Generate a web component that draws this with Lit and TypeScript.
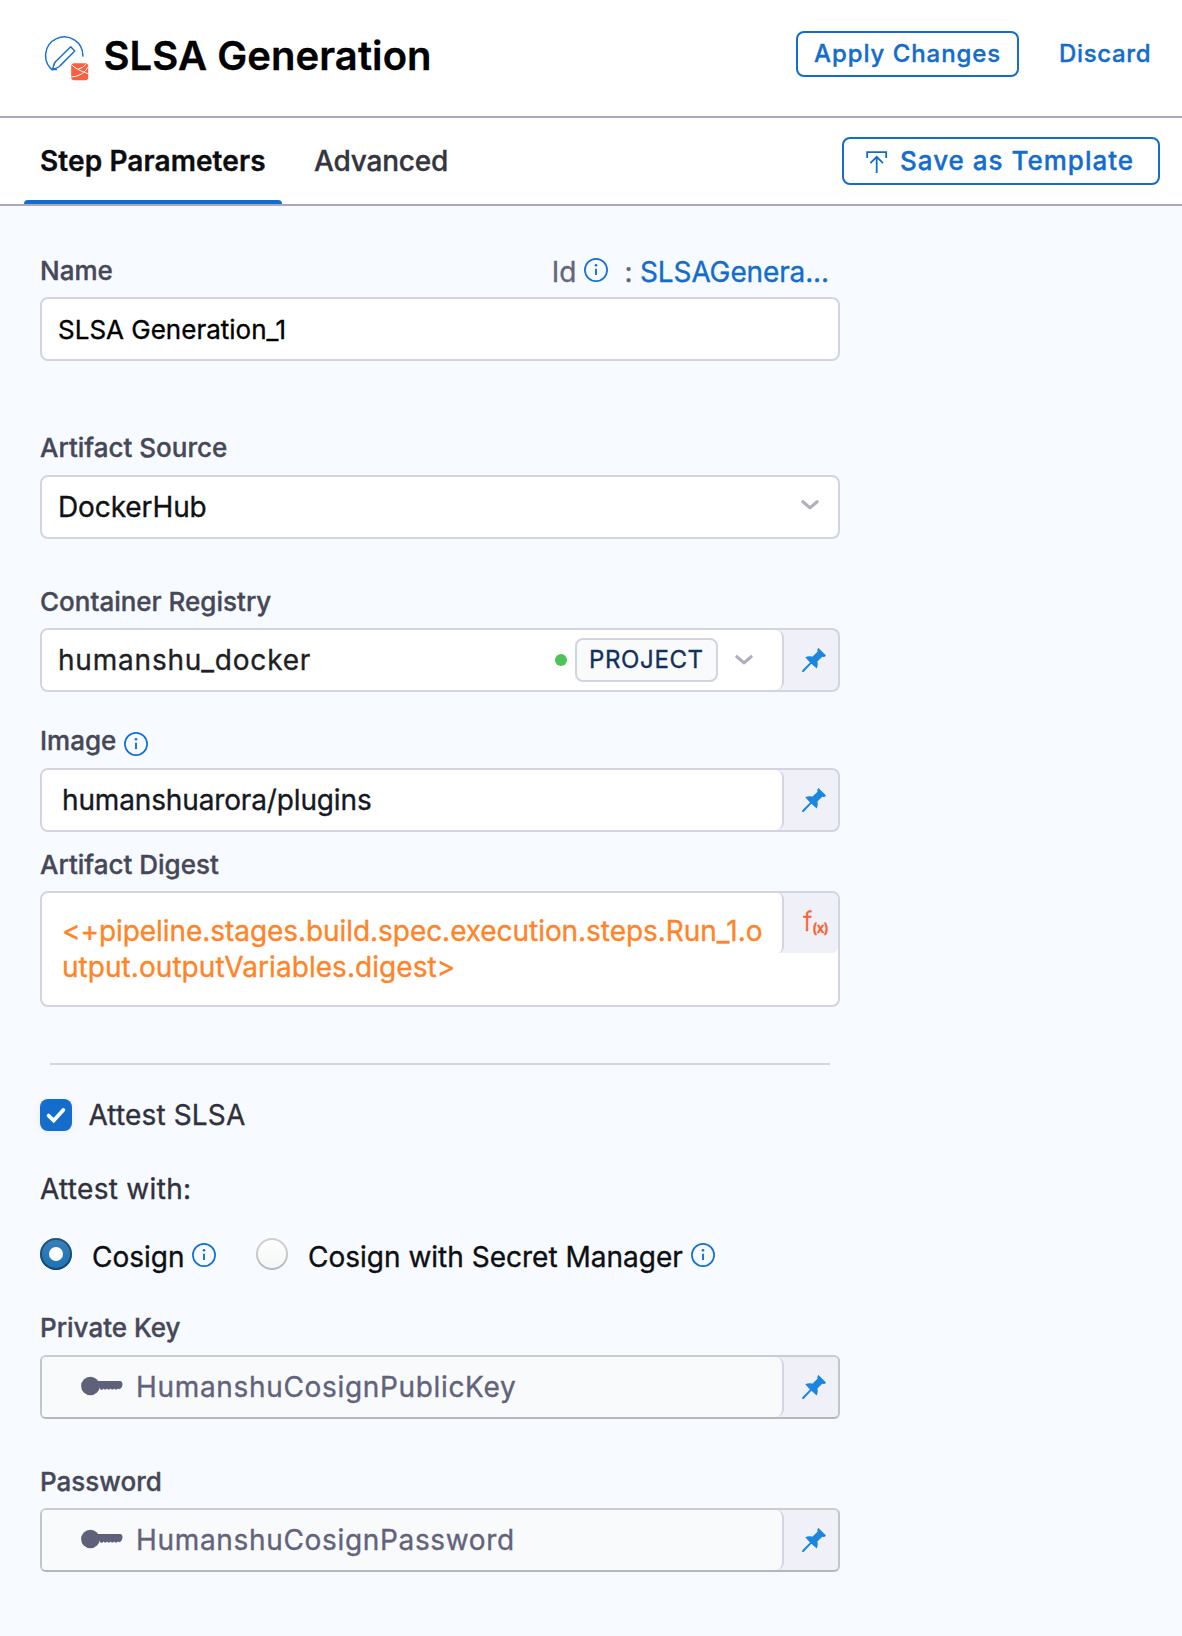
import { LitElement, html, css } from "lit";
import { customElement, property, state } from "lit/decorators.js";

const infoIcon = html`<svg class="info" width="24" height="24" viewBox="0 0 24 24" fill="none">
  <circle cx="12" cy="12" r="11.1" stroke="#1470d2" stroke-width="1.7" />
  <circle cx="12" cy="7.3" r="1.3" fill="#1470d2" />
  <path d="M12 10.7v6.3" stroke="#1470d2" stroke-width="1.9" />
</svg>`;

const chevronIcon = html`<svg class="chevron" width="18" height="10" viewBox="0 0 18 10" fill="none">
  <path d="M1.9 1.7L9 7.9l7.1-6.2" stroke="#b0afbe" stroke-width="3.2" stroke-linecap="round" stroke-linejoin="round" />
</svg>`;

const pinIcon = html`<svg class="pin" width="24" height="24" viewBox="0 0 24 24" fill="#1a86de">
  <path d="M16.5 0L24 7.4C23.2 8.7 21.6 9.1 20.3 8.8L15.4 13.6C16 16 15.8 18.5 14.7 20.6L9.4 15.8L1.6 24H.1L.3 22.3L8 14.5L3.3 9.3C5.5 8.1 8 8 10.3 8.7L15.5 3.8C15.1 2.5 15.4 1 16.5 0Z" />
</svg>`;

const keyIcon = html`<svg class="key" width="42" height="20" viewBox="0 0 42 20" fill="#5f6079">
  <circle cx="9.4" cy="10" r="9.3" />
  <path d="M16 5H39Q41.5 5.4 41.5 8.5Q41.5 11 39.6 12.4L38 13.2L37 12.4L35.8 13.4L34.2 13.4L33.2 12.4L32.2 13.6L30.6 13.6L29.6 12.4L28.6 13.6L27 13.6L26 12.4L25 13.6L23.4 13.6L22.4 12.4L21.4 13.8L19.8 13.8L18.6 12.6Z" />
</svg>`;

@customElement("pinned-field")
export class PinnedField extends LitElement {
  @property() value = "";
  @property({ type: Boolean, reflect: true }) secret = false;
  @property({ type: Boolean, reflect: true }) spaced = false;

  static styles = css`
    :host {
      display: flex;
      box-sizing: border-box;
      height: 64px;
      border: 2px solid #d4d4e0;
      border-radius: 8px;
      background: #f0f0f9;
      font: 400 28px/34px Inter, sans-serif;
      letter-spacing: -0.14px;
      color: #15191f;
    }
    :host([secret]) {
      border-color: #cbccce #c3c5c8 #b5b7ba #c3c5c8;
      border-radius: 6px;
      color: #62637b;
      letter-spacing: 0.67px;
    }
    :host([spaced]) {
      color: #1e1f24;
      letter-spacing: 0.8px;
    }
    .main {
      display: flex;
      align-items: center;
      box-sizing: border-box;
      flex: 1;
      padding-left: 20px;
      border-right: 2px solid #d4d4e2;
      border-radius: 6px 8px 8px 6px;
      background: #fff;
    }
    :host([spaced]) .main {
      padding-left: 16px;
    }
    :host([secret]) .main {
      padding-left: 39px;
      border-radius: 4px 8px 8px 4px;
      background: #f9fafb;
    }
    .text {
      flex: 1;
    }
    .key {
      flex: none;
      margin: -3px 13px 0 0;
    }
    .addon {
      display: flex;
      align-items: center;
      box-sizing: border-box;
      width: 54px;
      padding-left: 18px;
    }
  `;

  render() {
    return html`
      <div class="main">
        ${this.secret ? keyIcon : null}
        <span class="text">${this.value}</span>
        <slot></slot>
      </div>
      <div class="addon">${pinIcon}</div>
    `;
  }
}

@customElement("app-root")
export class AppRoot extends LitElement {
  @state() private attested = true;
  @state() private method: "cosign" | "manager" = "cosign";

  static styles = css`
    :host {
      display: block;
      box-sizing: border-box;
      min-height: 1636px;
      background: #f7faff;
      font: 400 28px/34px Inter, sans-serif;
      -webkit-text-stroke: 0.35px currentColor;
      color: #000;
    }
    svg {
      display: block;
      flex: none;
    }
    .header {
      display: flex;
      align-items: flex-start;
      box-sizing: border-box;
      height: 118px;
      padding: 31px 31px 0 44px;
      border-bottom: 2px solid #a9a8be;
      background: #fff;
    }
    .step-icon {
      margin: 5px 13.5px 0 0;
    }
    .title {
      margin: 0;
      font: 600 40px/49px Inter, sans-serif;
      letter-spacing: 0.07px;
    }
    .button {
      display: flex;
      box-sizing: border-box;
      height: 46px;
      padding: 0 16px;
      border: 2px solid #146ccb;
      border-radius: 8px;
      background: #fff;
      color: #146ccb;
      font: 500 24px/41px Inter, sans-serif;
      letter-spacing: 0.93px;
      white-space: nowrap;
    }
    .apply {
      width: 223px;
      margin-left: auto;
    }
    .discard {
      width: 92px;
      padding: 2px 0 0;
      margin-left: 40px;
      color: #146ccb;
      font: 500 24px/41px Inter, sans-serif;
      letter-spacing: 0.65px;
    }
    .tabbar {
      display: flex;
      align-items: flex-start;
      box-sizing: border-box;
      height: 88px;
      padding: 0 22px 0 24px;
      border-bottom: 2px solid #a9a8be;
      background: #fff;
    }
    .tab {
      box-sizing: border-box;
      width: 258px;
      padding: 26px 0 22px 16px;
      color: #0c0d10;
      font-weight: 600;
      letter-spacing: 0.1px;
    }
    .indicator {
      width: 258px;
      height: 4px;
      border-radius: 4px 4px 0 0;
      background: #146ccb;
    }
    .second {
      width: auto;
      padding-left: 32px;
      color: #34353f;
      font-weight: 500;
      letter-spacing: -0.2px;
    }
    .template {
      width: 318px;
      height: 48px;
      margin: 19px 0 0 auto;
      padding: 0 0 0 21.5px;
      font-size: 26px;
      line-height: 43px;
      letter-spacing: 1px;
    }
    .upload {
      margin: 12px 12.5px 0 0;
    }
    .form {
      width: 800px;
      padding: 49px 0 0 40px;
    }
    .label {
      display: flex;
      align-items: flex-start;
      height: 31px;
      margin-bottom: 12px;
      color: #464858;
      font-weight: 500;
      font-size: 26px;
      line-height: 31px;
    }
    .tight {
      margin-bottom: 11px;
    }
    .name-row {
      height: 34px;
      margin-bottom: 8px;
    }
    .id {
      display: flex;
      margin-left: auto;
      padding-right: 11px;
      color: #65667c;
      font-weight: 400;
      font-size: 28px;
      line-height: 34px;
    }
    .id .info {
      margin: 3px 16px 0 8px;
    }
    .id-value {
      margin-left: 7.5px;
      color: #146ccb;
      letter-spacing: -0.13px;
    }
    .field {
      display: flex;
      align-items: center;
      box-sizing: border-box;
      height: 64px;
      padding: 0 19px 0 16px;
      border: 2px solid #d4d4e0;
      border-radius: 8px;
      background: #fff;
    }
    .name {
      padding-top: 2px;
      font-size: 26px;
      line-height: 32px;
    }
    .source {
      justify-content: space-between;
      color: #101114;
      letter-spacing: -0.1px;
    }
    .source .chevron {
      margin-top: -4px;
    }
    .g17 { margin-top: 17px; }
    .g33 { margin-top: 33px; }
    .g42 { margin-top: 42px; }
    .g47 { margin-top: 47px; }
    .g71 { margin-top: 71px; }
    .status {
      width: 12px;
      height: 12px;
      margin-right: 8px;
      border-radius: 50%;
      background: #4fc456;
    }
    .scope {
      box-sizing: border-box;
      width: 143px;
      height: 44px;
      padding-left: 12px;
      border: 2px solid #d4d4e0;
      border-radius: 8px;
      background: #f9fafc;
      color: #11305c;
      font-size: 24px;
      line-height: 39px;
      letter-spacing: 0.64px;
    }
    .pick {
      padding: 0 29px 0 17px;
    }
    .image-info {
      margin: 7px 0 0 7.7px;
    }
    .digest {
      display: flex;
      align-items: flex-start;
      box-sizing: border-box;
      height: 116px;
      border: 2px solid #d4d4e0;
      border-radius: 8px;
      background: #fff;
      color: #ff8427;
      line-height: 36px;
    }
    .expression {
      display: flex;
      flex-direction: column;
      flex: none;
      width: 720px;
      padding: 20px 0 0 20px;
      box-sizing: border-box;
      letter-spacing: -0.06px;
      white-space: nowrap;
    }
    .rest {
      letter-spacing: 0.05px;
    }
    .fx {
      display: flex;
      box-sizing: border-box;
      flex: 1;
      height: 60px;
      margin-left: 16px;
      background: #f0f0f9;
      border-radius: 0 6px 6px 0;
      color: #f8622f;
    }
    .fx-edge {
      box-sizing: border-box;
      width: 6px;
      margin-right: 19.2px;
      border-right: 2px solid #d4d4e2;
      border-radius: 0 8px 8px 0;
      background: #fff;
    }
    .f {
      font-weight: 300;
      font-size: 26px;
      line-height: 58px;
    }
    .x {
      padding-top: 24px;
      font-weight: 600;
      font-size: 13.5px;
      line-height: 22px;
      letter-spacing: -0.5px;
    }
    .rule {
      height: 2px;
      margin: 56px 10px 34px;
      background: #d5d6de;
    }
    .check-row {
      display: flex;
      height: 32px;
      gap: 16.4px;
      color: #30313c;
      line-height: 32px;
      letter-spacing: 0.15px;
    }
    .checkbox {
      width: 32px;
      height: 32px;
      border-radius: 8px;
      background: #146ccb;
      box-shadow: 0 2px 8px rgba(96, 97, 112, 0.08);
    }
    .attest-with {
      margin: 41px 0 32px;
      color: #30313c;
      letter-spacing: 0.3px;
    }
    .radios {
      display: flex;
      height: 32px;
      color: #0e0f12;
    }
    .radio {
      display: flex;
      align-items: center;
      justify-content: center;
      width: 32px;
      height: 32px;
      margin-right: 20px;
      border-radius: 50%;
      background: linear-gradient(#ffffff, #f4f5f6);
      box-shadow: inset 0 0 0 2px rgba(16, 22, 26, 0.2), inset 0 -2px 0 rgba(16, 22, 26, 0.08);
    }
    .radio.on {
      background: linear-gradient(#3a80b8, #1a72b4);
      box-shadow: inset 0 0 0 2px rgba(16, 40, 66, 0.5), inset 0 -2px 0 rgba(16, 22, 26, 0.15);
    }
    .radio.on::before {
      content: "";
      width: 14px;
      height: 14px;
      border-radius: 50%;
      background: #fff;
    }
    .radio-text {
      padding-top: 2px;
    }
    .radios .info {
      margin: 5px 40px 0 7.5px;
    }
    .radios .info:last-child {
      margin: 5px 0 0 8.2px;
    }
    .password {
      margin: 47px 0 11px;
    }
  `;

  render() {
    return html`
      <header class="header">
        <svg class="step-icon" width="46" height="46" viewBox="0 0 46 46" fill="none">
          <path d="M38.8 20.6A18.6 18.6 0 1 0 8.8 34.2" stroke="#1a72d4" stroke-width="1.5" />
          <path d="M26.7 10.7L30.8 15L16.2 29.6C14.6 31.8 11.4 32.6 8.4 33.5C9.8 30.2 9.8 27 12 25.2Z" stroke="#1a72d4" stroke-width="1.5" stroke-linejoin="round" />
          <path d="M7.6 33.6H13" stroke="#1a72d4" stroke-width="1.2" />
          <rect x="27.2" y="27.2" width="17" height="17" rx="3" fill="#fb5f40" />
          <path d="M27.4 28.6Q32 33.6 44.4 37.8M27.4 41Q39.4 40.2 44.4 30.4M34 33.2Q39.4 32 42.2 28" stroke="#fff" stroke-width="1" />
        </svg>
        <h1 class="title">SLSA Generation</h1>
        <div class="button apply">Apply Changes</div>
        <div class="discard">Discard</div>
      </header>
      <nav class="tabbar">
        <div>
          <div class="tab">Step Parameters</div>
          <div class="indicator"></div>
        </div>
        <div class="tab second">Advanced</div>
        <div class="button template">
          <svg class="upload" width="22" height="22" viewBox="0 0 22 22" fill="none" stroke="#146ccb" stroke-width="1.8">
            <path d="M1.2 7V1.1H20.2V7M10.7 22V6M4.4 12.2L10.7 5.8L17 12.2" />
          </svg>
          <span>Save as Template</span>
        </div>
      </nav>
      <main class="form">
        <div class="label name-row">
          <span>Name</span>
          <span class="id">
            <span>Id</span>${infoIcon}<span>:</span>
            <span class="id-value">SLSAGenera...</span>
          </span>
        </div>
        <div class="field name">SLSA Generation_1</div>

        <div class="label g71">Artifact Source</div>
        <div class="field source"><span>DockerHub</span>${chevronIcon}</div>

        <div class="label tight g47">Container Registry</div>
        <pinned-field spaced value="humanshu_docker">
          <span class="status"></span>
          <span class="scope">PROJECT</span>
          <span class="pick">${chevronIcon}</span>
        </pinned-field>

        <div class="label g33">Image<span class="image-info">${infoIcon}</span></div>
        <pinned-field value="humanshuarora/plugins"></pinned-field>

        <div class="label tight g17">Artifact Digest</div>
        <div class="digest">
          <div class="expression">
            <span>&lt;+pipeline.stages.build.spec.execution.steps.Run_1.o</span>
            <span class="rest">utput.outputVariables.digest&gt;</span>
          </div>
          <div class="fx">
            <span class="fx-edge"></span><span class="f">f</span><span class="x">(x)</span>
          </div>
        </div>

        <div class="rule"></div>

        <div class="check-row">
          <span class="checkbox">
            ${this.attested
              ? html`<svg width="32" height="32" viewBox="0 0 32 32" fill="none">
                  <path d="M8.6 16.6L13.7 21.6L23.3 11" stroke="#fff" stroke-width="3.8" stroke-linecap="round" />
                </svg>`
              : null}
          </span>
          <span>Attest SLSA</span>
        </div>

        <div class="attest-with">Attest with:</div>
        <div class="radios">
          <span class="radio ${this.method === "cosign" ? "on" : ""}"></span>
          <span class="radio-text">Cosign</span>${infoIcon}
          <span class="radio ${this.method === "manager" ? "on" : ""}"></span>
          <span class="radio-text">Cosign with Secret Manager</span>${infoIcon}
        </div>

        <div class="label g42">Private Key</div>
        <pinned-field secret value="HumanshuCosignPublicKey"></pinned-field>

        <div class="label password">Password</div>
        <pinned-field secret value="HumanshuCosignPassword"></pinned-field>
      </main>
    `;
  }
}
